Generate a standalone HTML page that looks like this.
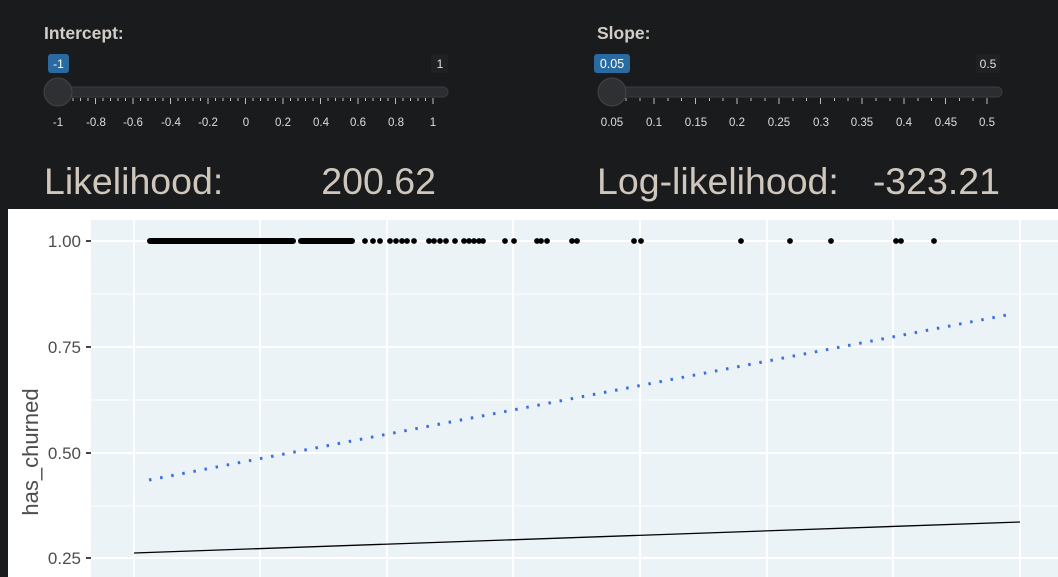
<!DOCTYPE html>
<html><head><meta charset="utf-8"><style>
html,body{margin:0;padding:0;background:#1a1b1d;width:1058px;height:577px;overflow:hidden}
svg{display:block}
text{font-family:"Liberation Sans",Arial,sans-serif}
</style></head><body>
<svg width="1058" height="577" viewBox="0 0 1058 577" xmlns="http://www.w3.org/2000/svg">
<rect width="1058" height="577" fill="#1a1b1d"/>
<!-- Intercept slider -->
<text x="44" y="39" font-size="17.5" font-weight="bold" fill="#d2cdc6">Intercept:</text>
<rect x="48" y="54" width="21" height="19" rx="3" fill="#2a6aa0"/>
<text x="58.5" y="68" font-size="12" fill="#fff" text-anchor="middle">-1</text>
<rect x="431" y="54" width="17" height="19" rx="3" fill="#202123"/>
<text x="440" y="68" font-size="12" fill="#e0e0e0" text-anchor="middle">1</text>
<rect x="48" y="87" width="400" height="10" rx="5" fill="#2c2d30" stroke="#3a3b3e"/>
<g stroke="#bbb" stroke-width="1">
<path d="M58 98v6M95.5 98v6M133 98v6M170.5 98v6M208 98v6M245.5 98v6M283 98v6M320.5 98v6M358 98v6M395.5 98v6M433 98v6"/>
<path d="M65.5 98v3M73 98v3M80.5 98v3M88 98v3M103 98v3M110.5 98v3M118 98v3M125.5 98v3M140.5 98v3M148 98v3M155.5 98v3M163 98v3M178 98v3M185.5 98v3M193 98v3M200.5 98v3M215.5 98v3M223 98v3M230.5 98v3M238 98v3M253 98v3M260.5 98v3M268 98v3M275.5 98v3M290.5 98v3M298 98v3M305.5 98v3M313 98v3M328 98v3M335.5 98v3M343 98v3M350.5 98v3M365.5 98v3M373 98v3M380.5 98v3M388 98v3M403 98v3M410.5 98v3M418 98v3M425.5 98v3"/>
</g>
<g font-size="11.5" fill="#ddd" text-anchor="middle">
<text x="58" y="126">-1</text><text x="96" y="126">-0.8</text><text x="133" y="126">-0.6</text><text x="171" y="126">-0.4</text><text x="208" y="126">-0.2</text><text x="246" y="126">0</text><text x="283" y="126">0.2</text><text x="321" y="126">0.4</text><text x="358" y="126">0.6</text><text x="396" y="126">0.8</text><text x="433" y="126">1</text>
</g>
<circle cx="58" cy="92" r="14" fill="#2f3033" stroke="#444" stroke-width="1"/>
<!-- Slope slider -->
<text x="597" y="39" font-size="17.5" font-weight="bold" fill="#d2cdc6">Slope:</text>
<rect x="594" y="54" width="36" height="19" rx="3" fill="#2a6aa0"/>
<text x="612" y="68" font-size="12.5" fill="#fff" text-anchor="middle">0.05</text>
<rect x="976" y="54" width="24" height="19" rx="3" fill="#202123"/>
<text x="988" y="68" font-size="12" fill="#e0e0e0" text-anchor="middle">0.5</text>
<rect x="602" y="87" width="400" height="10" rx="5" fill="#2c2d30" stroke="#3a3b3e"/>
<g stroke="#bbb" stroke-width="1">
<path d="M612 98v6M654 98v6M695.5 98v6M737 98v6M779 98v6M820.5 98v6M862 98v6M904 98v6M945.5 98v6M987 98v6"/>
<path d="M626 98v3M640 98v3M668 98v3M681.5 98v3M709.5 98v3M723 98v3M751 98v3M765 98v3M793 98v3M806.5 98v3M834.5 98v3M848 98v3M876 98v3M890 98v3M918 98v3M931.5 98v3M959.5 98v3M973 98v3"/>
</g>
<g font-size="11.5" fill="#ddd" text-anchor="middle">
<text x="612" y="126">0.05</text><text x="654" y="126">0.1</text><text x="696" y="126">0.15</text><text x="737" y="126">0.2</text><text x="779" y="126">0.25</text><text x="821" y="126">0.3</text><text x="862" y="126">0.35</text><text x="904" y="126">0.4</text><text x="946" y="126">0.45</text><text x="987" y="126">0.5</text>
</g>
<circle cx="612" cy="92" r="14" fill="#2f3033" stroke="#444" stroke-width="1"/>
<!-- Stats -->
<text x="44" y="194" font-size="37.5" fill="#cfc6bc">Likelihood:</text>
<text x="436" y="194" font-size="37.5" fill="#cfc6bc" text-anchor="end">200.62</text>
<text x="597" y="194" font-size="37.5" fill="#cfc6bc">Log-likelihood:</text>
<text x="1000" y="194" font-size="37.5" fill="#cfc6bc" text-anchor="end">-323.21</text>
<!-- Plot -->
<rect x="8" y="209" width="1050" height="368" fill="#fff"/>
<rect x="91" y="220" width="967" height="357" fill="#ebf3f7"/>
<g stroke="#fff" stroke-width="1">
<path d="M91 294H1058M91 400H1058M91 506H1058"/>
</g>
<g stroke="#fff" stroke-width="2">
<path d="M91 241H1058M91 347H1058M91 453H1058M91 558H1058"/>
<path d="M134 220V577M260 220V577M387 220V577M513 220V577M640 220V577M767 220V577M893 220V577M1020 220V577"/>
</g>
<g stroke="#444" stroke-width="2"><path d="M86 241h5M86 347h5M86 453h5M86 558h5"/></g>
<g font-size="17" fill="#4d4d4d" text-anchor="end">
<text x="81" y="247">1.00</text><text x="81" y="353">0.75</text><text x="81" y="459">0.50</text><text x="81" y="564">0.25</text>
</g>
<text transform="translate(38,452) rotate(-90)" font-size="22" fill="#4d4d4d" text-anchor="middle">has_churned</text>
<!-- points -->
<path d="M150 241H293M301 241H352" stroke="#000" stroke-width="6" stroke-linecap="round"/>
<g fill="#000">
<circle cx="365" cy="241" r="2.9"/><circle cx="373" cy="241" r="2.9"/><circle cx="380" cy="241" r="2.9"/>
<circle cx="390" cy="241" r="2.9"/><circle cx="396" cy="241" r="2.9"/><circle cx="402" cy="241" r="2.9"/><circle cx="407" cy="241" r="2.9"/><circle cx="414" cy="241" r="2.9"/>
<circle cx="429" cy="241" r="2.9"/><circle cx="434" cy="241" r="2.9"/><circle cx="440" cy="241" r="2.9"/><circle cx="446" cy="241" r="2.9"/><circle cx="455" cy="241" r="2.9"/>
<circle cx="464" cy="241" r="2.9"/><circle cx="469" cy="241" r="2.9"/><circle cx="474" cy="241" r="2.9"/><circle cx="479" cy="241" r="2.9"/><circle cx="483" cy="241" r="2.9"/>
<circle cx="505" cy="241" r="2.9"/><circle cx="514" cy="241" r="2.9"/>
<circle cx="537" cy="241" r="2.9"/><circle cx="541" cy="241" r="2.9"/><circle cx="547" cy="241" r="2.9"/>
<circle cx="572" cy="241" r="2.9"/><circle cx="577" cy="241" r="2.9"/>
<circle cx="634" cy="241" r="2.9"/><circle cx="641" cy="241" r="2.9"/>
<circle cx="741" cy="241" r="2.9"/><circle cx="790" cy="241" r="2.9"/><circle cx="831" cy="241" r="2.9"/>
<circle cx="896" cy="241" r="2.9"/><circle cx="901" cy="241" r="2.9"/><circle cx="934" cy="241" r="2.9"/>
</g>
<!-- lines -->
<path d="M149 480L1012 314" stroke="#3b6fe0" stroke-width="3" stroke-dasharray="2.5 8.8" fill="none"/>
<path d="M134 553L1020 522" stroke="#000" stroke-width="1.3" fill="none"/>
</svg>
</body></html>
